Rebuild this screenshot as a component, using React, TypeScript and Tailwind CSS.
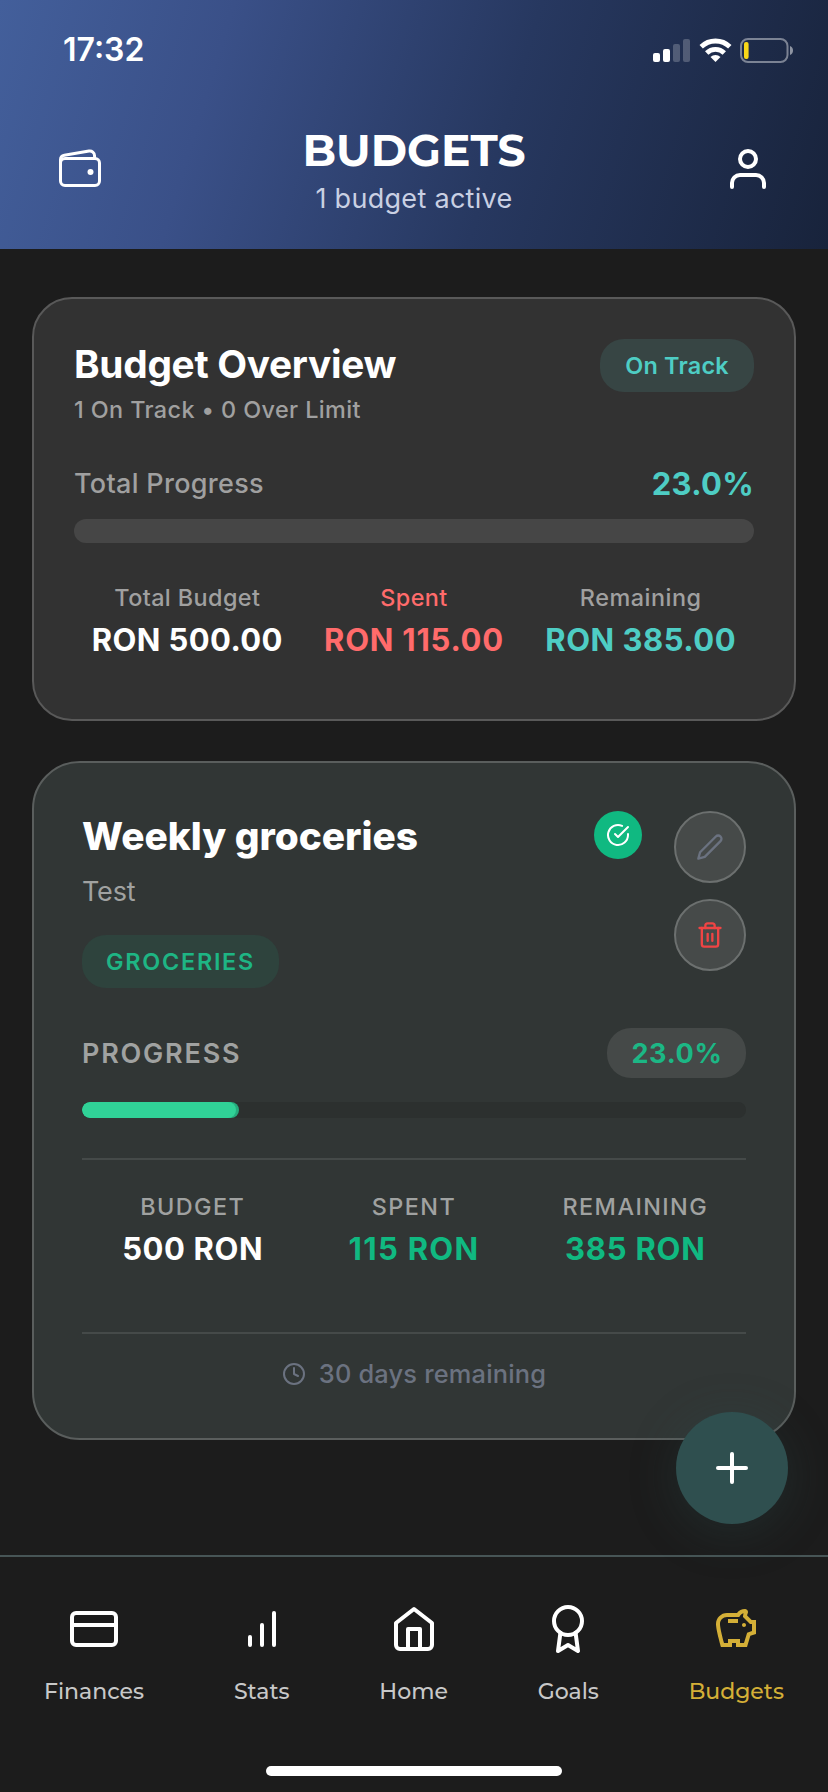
import type { ReactNode } from "react";
import { FiAward, FiBarChart, FiCheckCircle, FiClock, FiCreditCard, FiEdit2, FiHome, FiPlus, FiTrash2, FiUser } from "react-icons/fi";
import { IoWalletOutline } from "react-icons/io5";

function StatusBar() {
  return (
    <div className="flex h-[100px] items-center justify-between pl-[63px] pr-[34px]">
      <span className="text-[32px] font-semibold leading-9">17:32</span>
      <div className="flex items-center">
        <svg width="37" height="23" viewBox="0 0 37 23" fill="white">
          <rect x="0" y="14" width="7" height="9" rx="2" />
          <rect x="10" y="10" width="7" height="13" rx="2" />
          <rect x="20" y="5" width="7" height="18" rx="2" opacity="0.22" />
          <rect x="30" y="0" width="7" height="23" rx="2" opacity="0.22" />
        </svg>
        <svg className="ml-[9px]" width="33" height="24" viewBox="0 0 33 24">
          <g fill="none" stroke="white" strokeWidth="4.8">
            <path d="M2.2 8.800a20.500 20.500 0 0 1 28.600 0" />
            <path d="M7.700 15a12.600 12.600 0 0 1 17.600 0" />
          </g>
          <path d="M16.500 24l-5-5a7.200 7.200 0 0 1 10 0z" fill="white" />
        </svg>
        <svg className="ml-[8px]" width="54" height="25" viewBox="0 0 54 25">
          <rect x="1" y="1" width="46.500" height="23" rx="7" fill="none" stroke="white" strokeOpacity="0.42" strokeWidth="2" />
          <rect x="4" y="4" width="4.600" height="17" rx="2" fill="#f8d718" />
          <path d="M50 8c4 1.500 4 7.500 0 9z" fill="white" opacity="0.5" />
        </svg>
      </div>
    </div>
  );
}

function Header() {
  return (
    <header className="h-[249px] bg-[linear-gradient(107deg,#435f9b_0%,#3a5088_26%,#273860_60%,#18233b_100%)]">
      <StatusBar />
      <div className="flex h-[138px] items-center justify-between px-14">
        <IoWalletOutline size={48} />
        <div className="mt-1 flex flex-col items-center">
          <h1 className="font-['Montserrat','Inter',sans-serif] text-[44px] font-bold leading-[48px]">BUDGETS</h1>
          <p className="mt-[7px] text-[27px] leading-9 tracking-[0.3px] text-[#c9d0e3]">1 budget active</p>
        </div>
        <FiUser size={48} />
      </div>
    </header>
  );
}

function Stat({ label, value, labelClass, valueClass }: { label: string; value: string; labelClass: string; valueClass: string }) {
  return (
    <div className="flex flex-1 flex-col items-center whitespace-nowrap">
      <span className={`text-[23.4px] font-medium leading-[30px] ${labelClass}`}>{label}</span>
      <span className={`mt-[7px] text-[31px] font-bold leading-10 ${valueClass}`}>{value}</span>
    </div>
  );
}

function OverviewCard() {
  return (
    <section className="rounded-[40px] border-2 border-[#595959] bg-[#323232] px-10 pt-10 pb-[59px]">
      <div className="flex items-start justify-between">
        <div>
          <h2 className="text-[38.8px] font-bold leading-[50px] tracking-[-0.3px]">Budget Overview</h2>
          <p className="mt-1.5 text-[23.4px] font-medium leading-[30px] tracking-[0.4px] text-[#a0a0a0]">1 On Track • 0 Over Limit</p>
        </div>
        <span className="flex h-[53px] w-[154px] items-center justify-center rounded-3xl bg-[#374544] text-[23.4px] font-semibold tracking-[0.23px] text-[#4ecdc4]">
          On Track
        </span>
      </div>
      <div className="mt-[39px] flex h-10 items-center justify-between">
        <span className="text-[27px] font-medium tracking-[0.3px] text-[#a0a0a0]">Total Progress</span>
        <span className="text-[31px] font-bold tracking-[0.3px] text-[#4ecdc4]">23.0%</span>
      </div>
      <div className="mt-[15px] h-6 rounded-full bg-[#464646]" />
      <div className="mt-10 flex">
        <Stat label="Total Budget" value="RON 500.00" labelClass="text-[#a0a0a0] tracking-[0.41px]" valueClass="tracking-[0.4px]" />
        <Stat label="Spent" value="RON 115.00" labelClass="text-[#ff6b6b] tracking-[0.4px]" valueClass="text-[#ff6b6b] tracking-[0.75px]" />
        <Stat label="Remaining" value="RON 385.00" labelClass="text-[#a0a0a0] tracking-[0.53px]" valueClass="text-[#4ecdc4] tracking-[0.5px]" />
      </div>
    </section>
  );
}

function RoundButton({ children, className }: { children: ReactNode; className: string }) {
  return (
    <button className={`flex size-[72px] items-center justify-center rounded-full border-2 border-[#6c706f] bg-[#464a49] ${className}`}>
      {children}
    </button>
  );
}

function BudgetCard() {
  return (
    <section className="mt-10 rounded-[48px] border-2 border-[#5a5e5d] bg-[#313635] px-12 pt-12 pb-[46px]">
      <div className="flex h-[177px] items-start">
        <div className="flex-1">
          <h2 className="text-[38.8px] font-extrabold leading-[50px]">Weekly groceries</h2>
          <p className="mt-[13px] text-[27px] leading-9 tracking-[-0.2px] text-[#a0a2a1]">Test</p>
          <span className="mt-[25px] flex h-[53px] w-[197px] items-center justify-center rounded-3xl bg-[#2e433d] text-[23.4px] font-semibold tracking-[1.74px] text-[#1eb584]">
            GROCERIES
          </span>
        </div>
        <span className="mr-8 flex size-12 items-center justify-center rounded-full bg-[#10b981]">
          <FiCheckCircle size={24} />
        </span>
        <div className="flex flex-col gap-4">
          <RoundButton className="text-[#6b7280]"><FiEdit2 size={28} /></RoundButton>
          <RoundButton className="text-[#ef4444]"><FiTrash2 size={28} /></RoundButton>
        </div>
      </div>
      <div className="mt-10 flex items-center justify-between">
        <span className="pt-0.5 text-[27px] font-semibold leading-9 tracking-[1.78px] text-[#a0a2a1]">PROGRESS</span>
        <span className="flex h-[50px] w-[139px] items-center justify-center rounded-3xl bg-[#454948] pt-0.5 pl-px text-[27px] font-bold tracking-[0.7px] text-[#1cb785]">
          23.0%
        </span>
      </div>
      <div className="mt-6 h-4 overflow-hidden rounded-full bg-[#2c302f]">
        <div className="h-full w-[157px] rounded-full bg-[#26ab7d]">
          <div className="h-full w-[154px] rounded-full bg-[#30d297]" />
        </div>
      </div>
      <div className="mt-10 flex border-y-2 border-[#454a49] pt-8 pb-[63px]">
        <Stat label="BUDGET" value="500 RON" labelClass="text-[#a0a2a1] tracking-[1.42px]" valueClass="tracking-[0.6px]" />
        <Stat label="SPENT" value="115 RON" labelClass="text-[#a0a2a1] tracking-[1.42px]" valueClass="text-[#10b981] tracking-[1.3px]" />
        <Stat label="REMAINING" value="385 RON" labelClass="text-[#a0a2a1] tracking-[1.42px]" valueClass="text-[#10b981] tracking-[0.8px]" />
      </div>
      <div className="mt-[22px] flex h-9 items-center justify-center gap-[13px] text-[#6b7280]">
        <FiClock size={24} />
        <span className="text-[25.4px] font-medium tracking-[0.19px]">30 days remaining</span>
      </div>
    </section>
  );
}

function PiggyBank() {
  return (
    <svg width="48" height="48" viewBox="0 0 24 24" fill="currentColor">
      <path d="M15 10C15 9.450 15.450 9 16 9C16.550 9 17 9.450 17 10S16.550 11 16 11 15 10.550 15 10M22 7.500V14.470L19.180 15.410L17.500 21H12V19H10V21H4.500C4.500 21 2 12.540 2 9.500S4.460 4 7.500 4H12.500C13.410 2.790 14.860 2 16.500 2C17.330 2 18 2.670 18 3.500C18 3.710 17.960 3.900 17.880 4.080C17.740 4.420 17.620 4.810 17.560 5.230L19.830 7.500H22M20 9.500H19L15.500 6C15.500 5.350 15.590 4.710 15.760 4.090C14.790 4.340 14 5.060 13.670 6H7.500C5.570 6 4 7.570 4 9.500C4 11.380 5.220 16.150 6 19H8V17H14V19H16L17.560 13.850L20 13.030V9.500M13 9H8V7H13V9Z" />
    </svg>
  );
}

const tabs = [
  { label: "Finances", icon: <FiCreditCard size={48} /> },
  { label: "Stats", icon: <FiBarChart size={48} /> },
  { label: "Home", icon: <FiHome size={48} /> },
  { label: "Goals", icon: <FiAward size={48} /> },
  { label: "Budgets", icon: <PiggyBank />, active: true },
];

function TabBar() {
  return (
    <nav className="flex h-[237px] flex-col items-center justify-between border-t-2 border-[#475556] bg-[#1c1c1c] pt-12 pb-4">
      <div className="flex w-full justify-between pl-11 pr-[44px]">
        {tabs.map((t) => (
          <div key={t.label} className={`flex flex-col items-center ${t.active ? "text-[#d4af37]" : "text-white"}`}>
            {t.icon}
            <span className={`mt-6 font-['Montserrat','Inter',sans-serif] text-[22px] font-medium leading-[30px] ${t.active ? "" : "text-[#c8c8c8]"}`}>
              {t.label}
            </span>
          </div>
        ))}
      </div>
      <div className="h-2.5 w-[296px] rounded-full bg-white" />
    </nav>
  );
}

export default function App() {
  return (
    <div className="relative flex h-[1792px] w-[828px] flex-col overflow-hidden bg-[#1c1c1c] font-['Inter',sans-serif] text-white">
      <Header />
      <main className="flex-1 px-8 pt-12">
        <OverviewCard />
        <BudgetCard />
      </main>
      <TabBar />
      <button className="absolute top-[1412px] left-[676px] flex size-28 items-center justify-center rounded-full bg-[#2f4f4f] shadow-[0_8px_48px_rgba(47,79,79,0.3)]">
        <FiPlus size={48} />
      </button>
    </div>
  );
}
